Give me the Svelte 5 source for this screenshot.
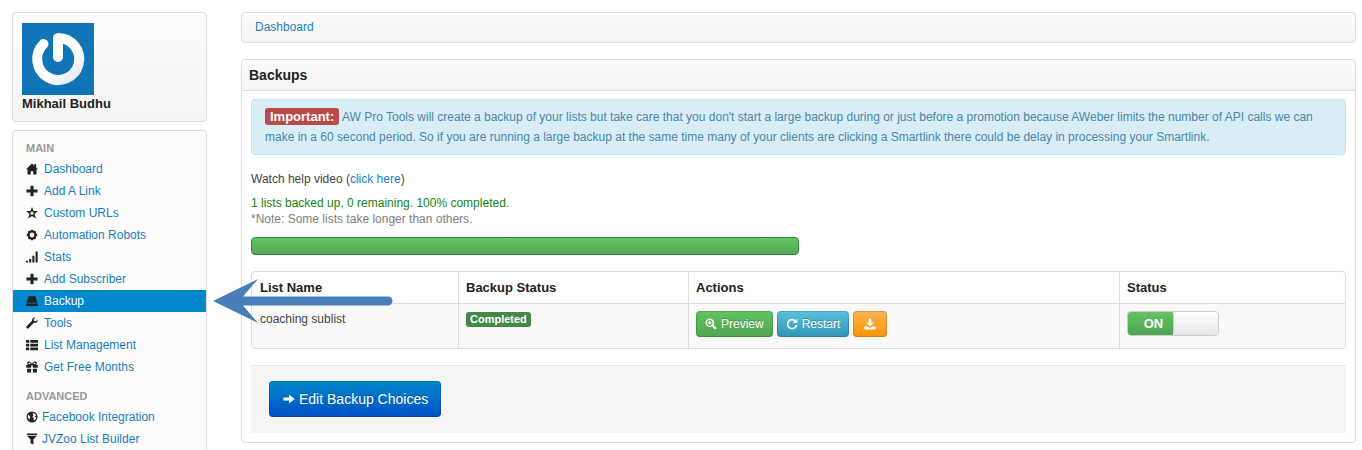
<script lang="ts">
  type NavItem = { label: string; icon: string; active?: boolean };

  // 14x14 glyphs
  const icons: Record<string, string> = {
    home: "M7 .5 0 7.300h1.800V13.500h3.800V9.500h2.800v4h3.800V7.300H14L11.800 5.200V1.200H9.800v2z",
    plus: "M5.200.8h3.600v4.400h4.700v3.600H8.800v4.400H5.200V8.800H.5V5.200h4.700z",
    star: "M7 0 8.900 4.800H14l-4.100 3.300 1.700 5.400L7 10.400l-4.600 3.100 1.700-5.400L0 4.800h5.100zM7 4.300 6.200 6.400H4.300l1.500 1.200-.6 1.900L7 8.400l1.800 1.100-.6-1.900 1.500-1.200H7.800z",
    cog: "M5.800.8h2.400l.5 1.500 1.500-.5 1.700 1.700-.6 1.500 1.700.8v2.400l-1.700.8.6 1.500-1.700 1.700-1.500-.6-.5 1.600H5.800l-.5-1.600-1.500.6-1.700-1.700.6-1.500L1 8.200V5.800L2.700 5l-.6-1.500 1.700-1.700 1.500.5zM7 4.200a2.800 2.800 0 1 0 0 5.600 2.800 2.800 0 0 0 0-5.600z",
    stats: "M0 11.300h2.400v2.200H0zM3.700 9.200h2.400v4.300H3.700zM7.400 5.500h2.400v8H7.400zM11.200.5h2.400v13h-2.400z",
    disk: "M3 1.500h8L13.400 9H.6zM.3 9.800h13.400v3H.3z",
    wrench: "M13.600 3.200 11.600 5 9.400 4.800 9 2.500 11 .6C8.800.1 6.700 1.800 7 4.300L.8 10.800c-1.300 1.500.7 3.500 2.300 2.200l6-6.200c2.700.6 4.900-1.300 4.500-3.600z",
    list: "M0 1.200h3.800v3.200H0zM5 1.200h9v3.200H5zM0 5.500h3.800v3.200H0zM5 5.500h9v3.200H5zM0 9.800h3.800V13H0zM5 9.800h9V13H5z",
    gift: "M.3 4.500h3.200C-.2 3.700 1-.2 3.900.6 5.300 1 6.300 2.200 7 3.300 7.700 2.200 8.700 1 10.100.6c2.900-.8 4.100 3.100.4 3.900h3.200V8H8V5.300H6V8H.3zM3.400 1.900c-1.300.4-.7 1.700.4 1.500h1.700c-.6-.9-1.300-1.700-2.100-1.500zm7.200 0c-.8-.2-1.500.6-2.100 1.500h1.700c1.100.2 1.700-1.100.4-1.500zM1.200 9H6v4.500H1.200zM8 9h4.800v4.500H8z",
    globe: "M7 .6a6.400 6.400 0 1 0 0 12.800A6.400 6.400 0 0 0 7 .6zM8 2.300l2.500.9 1.400 2-1 .2-.7 1.200 1.300.6.300 1.500-1.900 2.300-1-.5.2-2.300-1.500-1L8 5.500l1.200-.8L8 4zM2.300 4.500l1.600.8 1.200 1.700-.9 1.300.3 2.200L2.200 8z",
    filter: "M1 .5h12v2.200H1zM1.500 3.500h11L8.700 7.500V13.500l-3.400-1.500V7.500z",
    zoom: "M5.500.5a5 5 0 1 0 2.700 9.300l3.700 3.700 1.700-1.700-3.700-3.700A5 5 0 0 0 5.500.5zm0 1.800a3.300 3.300 0 1 1 0 6.600 3.300 3.300 0 0 1 0-6.600zM4.800 3.500h1.400v1.400h1.400v1.400H6.200v1.400H4.800V6.300H3.400V4.900h1.400z",
    repeat: "M11.300 2.500 13.200.6v5.200H8l1.900-1.900a4.300 4.300 0 1 0 1.400 4.300h2A6.200 6.200 0 1 1 11.300 2.500z",
    download: "M5.500.5h3v5h2.800L7 9.800 2.700 5.500h2.800zM.5 9.800h4.200L7 12l2.300-2.200h4.200v3.700H.5z",
    arrow: "M.5 5.300h6.600V1.800L13.500 7l-6.400 5.200V8.700H.5z",
  };

  const mainNav: NavItem[] = [
    { label: "Dashboard", icon: "home" },
    { label: "Add A Link", icon: "plus" },
    { label: "Custom URLs", icon: "star" },
    { label: "Automation Robots", icon: "cog" },
    { label: "Stats", icon: "stats" },
    { label: "Add Subscriber", icon: "plus" },
    { label: "Backup", icon: "disk", active: true },
    { label: "Tools", icon: "wrench" },
    { label: "List Management", icon: "list" },
    { label: "Get Free Months", icon: "gift" },
  ];

  const advancedNav: NavItem[] = [
    { label: "Facebook Integration", icon: "globe" },
    { label: "JVZoo List Builder", icon: "filter" },
  ];

  let enabled = $state(true);
</script>

{#snippet icon(name: string)}
  <svg class="icon" viewBox="0 0 14 14" aria-hidden="true">
    <path d={icons[name]} fill-rule="evenodd" />
  </svg>
{/snippet}

{#snippet navList(items: NavItem[])}
  <ul>
    {#each items as item}
      <li class:active={item.active}>
        <a href="#top">{@render icon(item.icon)}{item.label}</a>
        {#if item.active}
          <svg class="pointer" viewBox="0 0 180 44" aria-hidden="true">
            <path d="M0 22 45 0 30 17.500H175a4.500 4.500 0 0 1 0 9H30L45 44z" />
          </svg>
        {/if}
      </li>
    {/each}
  </ul>
{/snippet}

<div class="page">
  <aside>
    <div class="profile">
      <svg class="avatar" viewBox="0 0 72 72" role="img" aria-label="Avatar">
        <defs>
          <linearGradient id="ring" x1="0" y1="0" x2="1" y2="1">
            <stop offset="0.6" stop-color="#fff" />
            <stop offset="1" stop-color="#dfe7ee" />
          </linearGradient>
        </defs>
        <rect width="72" height="72" fill="#0f75b7" />
        <path
          d="M21.500 21A21 21 0 1 0 36 15V34"
          fill="none"
          stroke="url(#ring)"
          stroke-width="10"
          stroke-linecap="round"
          stroke-linejoin="round"
        />
      </svg>
      <strong>Mikhail Budhu</strong>
    </div>

    <nav>
      <h2>MAIN</h2>
      {@render navList(mainNav)}
      <h2>ADVANCED</h2>
      <div class="advanced">
        {@render navList(advancedNav)}
      </div>
    </nav>
  </aside>

  <main>
    <div class="breadcrumb"><a href="#top">Dashboard</a></div>

    <section class="box">
      <h1>Backups</h1>
      <div class="content">
        <div class="alert">
          <span class="label important">Important:</span>
          AW Pro Tools will create a backup of your lists but take care that you don't start a large
          backup during or just before a promotion because AWeber limits the number of API calls we
          can make in a 60 second period. So if you are running a large backup at the same time many
          of your clients are clicking a Smartlink there could be delay in processing your Smartlink.
        </div>

        <p class="help">Watch help video (<a href="#top">click here</a>)</p>
        <p class="done">1 lists backed up, 0 remaining. 100% completed.</p>
        <p class="note">*Note: Some lists take longer than others.</p>
        <div class="progress" role="progressbar" aria-label="Backup progress" aria-valuenow="100"></div>

        <table>
          <thead>
            <tr>
              <th class="col-name">List Name</th>
              <th class="col-backup">Backup Status</th>
              <th>Actions</th>
              <th class="col-status">Status</th>
            </tr>
          </thead>
          <tbody>
            <tr>
              <td>coaching sublist</td>
              <td><span class="label success">Completed</span></td>
              <td>
                <div class="actions">
                  <button class="btn green">{@render icon("zoom")}Preview</button>
                  <button class="btn blue">{@render icon("repeat")}Restart</button>
                  <button class="btn orange" aria-label="Download">{@render icon("download")}</button>
                </div>
              </td>
              <td>
                <label class="switch">
                  <input type="checkbox" aria-label="Status" bind:checked={enabled} />
                  <span class="on">{enabled ? "ON" : "OFF"}</span>
                  <span class="knob"></span>
                </label>
              </td>
            </tr>
          </tbody>
        </table>

        <div class="form-actions">
          <button class="btn primary">{@render icon("arrow")}Edit Backup Choices</button>
        </div>
      </div>
    </section>
  </main>
</div>

<style>
  :global(body) {
    background: #fff;
    color: #444;
    font-family: "Liberation Sans", Arial, Helvetica, sans-serif;
    font-size: 12px;
    line-height: 20px;
  }

  .page {
    display: grid;
    grid-template-columns: 195px minmax(0, 1fr);
    gap: 34px;
    padding: 12px 6px 0 12px;
  }

  a {
    color: #1a7dbd;
    text-decoration: none;
  }

  h1,
  h2,
  p,
  ul {
    margin: 0;
    padding: 0;
  }

  .icon {
    width: 12px;
    height: 12px;
    flex: none;
    fill: currentColor;
  }

  /* Sidebar */
  .profile,
  nav,
  .breadcrumb,
  .box {
    border: 1px solid #ddd;
    border-radius: 4px;
    box-sizing: border-box;
  }

  .profile,
  .breadcrumb {
    background: linear-gradient(#fdfdfd, #f4f4f4);
  }

  .profile {
    padding: 10px 9px 8px;
    margin-bottom: 8px;
  }

  .avatar {
    display: block;
    width: 72px;
    height: 72px;
  }

  .profile strong {
    display: block;
    font-size: 13px;
    line-height: 18px;
    color: #222;
  }

  nav {
    padding: 8px 0 20px;
    background: #fcfcfc;
  }

  nav h2 {
    padding-left: 13px;
    font-size: 11px;
    line-height: 19px;
    color: #999;
  }

  nav ul {
    list-style: none;
    margin-bottom: 9px;
  }

  nav li {
    position: relative;
  }

  nav li a {
    display: flex;
    align-items: center;
    gap: 6px;
    padding-left: 13px;
    line-height: 22px;
  }

  .advanced a {
    gap: 4px;
  }

  nav .icon {
    color: #222;
  }

  .active a {
    background: #0088cc;
    color: #fff;
  }

  /* Arrow drawn over the main column, pointing at the active item */
  .pointer {
    position: absolute;
    top: -11px;
    left: calc(100% + 7px);
    width: 180px;
    height: 44px;
    fill: #4a7ebb;
  }

  /* Main column */
  .breadcrumb {
    padding: 5px 13px;
    margin-bottom: 16px;
    line-height: 19px;
  }

  h1 {
    padding: 0 7px;
    border-bottom: 1px solid #ddd;
    border-radius: 4px 4px 0 0;
    background: linear-gradient(#fdfdfd, #f4f4f4);
    font-size: 14px;
    line-height: 30px;
    color: #222;
  }

  .content {
    padding: 8px 9px 9px;
  }

  .alert {
    padding: 7px 20px 7px 13px;
    border: 1px solid #bce8f1;
    border-radius: 4px;
    background: #d9edf7;
    color: #4a87a8;
  }

  .label {
    display: inline-block;
    border-radius: 3px;
    color: #fff;
    font-weight: bold;
  }

  .important {
    padding: 0 5px;
    background: #b94a48;
    font-size: 13px;
    line-height: 17px;
  }

  .success {
    padding: 0 4px;
    background: #468847;
    font-size: 11px;
    line-height: 15px;
  }

  .help {
    margin: 14px 0 6px;
  }

  .done,
  .note {
    line-height: 16px;
  }

  .done {
    color: #148514;
  }

  .note {
    color: #808080;
  }

  .progress {
    width: 50%;
    height: 18px;
    margin: 10px 0 16px;
    border: 1px solid #2f8a3a;
    border-radius: 4px;
    box-sizing: border-box;
    background: linear-gradient(#62c462, #57a957);
  }

  table {
    width: 100%;
    border: 1px solid #ddd;
    border-radius: 4px;
    border-spacing: 0;
    table-layout: fixed;
    overflow: hidden;
  }

  th,
  td {
    padding: 6px 8px 5px;
    text-align: left;
    vertical-align: top;
    box-sizing: border-box;
  }

  th {
    font-size: 13px;
    color: #222;
  }

  td {
    padding: 5px 8px 11px;
    border-top: 1px solid #ddd;
    background: #f9f9f9;
  }

  th + th,
  td + td {
    border-left: 1px solid #ddd;
    padding-left: 7px;
  }

  .col-name {
    width: 206px;
  }

  .col-backup {
    width: 230px;
  }

  .col-status {
    width: 226px;
  }

  .actions {
    display: flex;
    gap: 4px;
    padding-top: 2px;
  }

  .btn {
    display: flex;
    align-items: center;
    gap: 4px;
    height: 26px;
    padding: 0 8px;
    border: 1px solid rgba(0, 0, 0, 0.15);
    border-radius: 4px;
    color: #fff;
    font-family: inherit;
    font-size: 12px;
    text-shadow: 0 -1px 0 rgba(0, 0, 0, 0.25);
  }

  .green {
    background: linear-gradient(#62c462, #51a351) border-box;
  }

  .blue {
    background: linear-gradient(#5bc0de, #2f96b4) border-box;
  }

  .orange {
    padding: 0 10px;
    background: linear-gradient(#fbb450, #f89406) border-box;
  }

  .primary {
    height: 36px;
    padding: 0 12px 0 13px;
    background: linear-gradient(#0088cc, #0050c4) border-box;
    font-size: 14px;
  }

  .switch {
    position: relative;
    display: flex;
    width: 92px;
    height: 25px;
    margin-top: 2px;
    border: 1px solid #ccc;
    border-radius: 4px;
    box-sizing: border-box;
    overflow: hidden;
  }

  .switch input {
    position: absolute;
    opacity: 0;
  }

  .on {
    width: 50%;
    padding-left: 6px;
    box-sizing: border-box;
    background: linear-gradient(#62c462, #51a351);
    color: #fff;
    font-size: 13px;
    font-weight: bold;
    line-height: 23px;
    text-align: center;
  }

  .knob {
    flex: 1;
    border-left: 1px solid #ccc;
    border-radius: 4px;
    background: linear-gradient(#fff, #e6e6e6);
  }

  .form-actions {
    margin-top: 16px;
    padding: 15px 18px 16px;
    border-top: 1px solid #e5e5e5;
    background: #f5f5f5;
  }
</style>
